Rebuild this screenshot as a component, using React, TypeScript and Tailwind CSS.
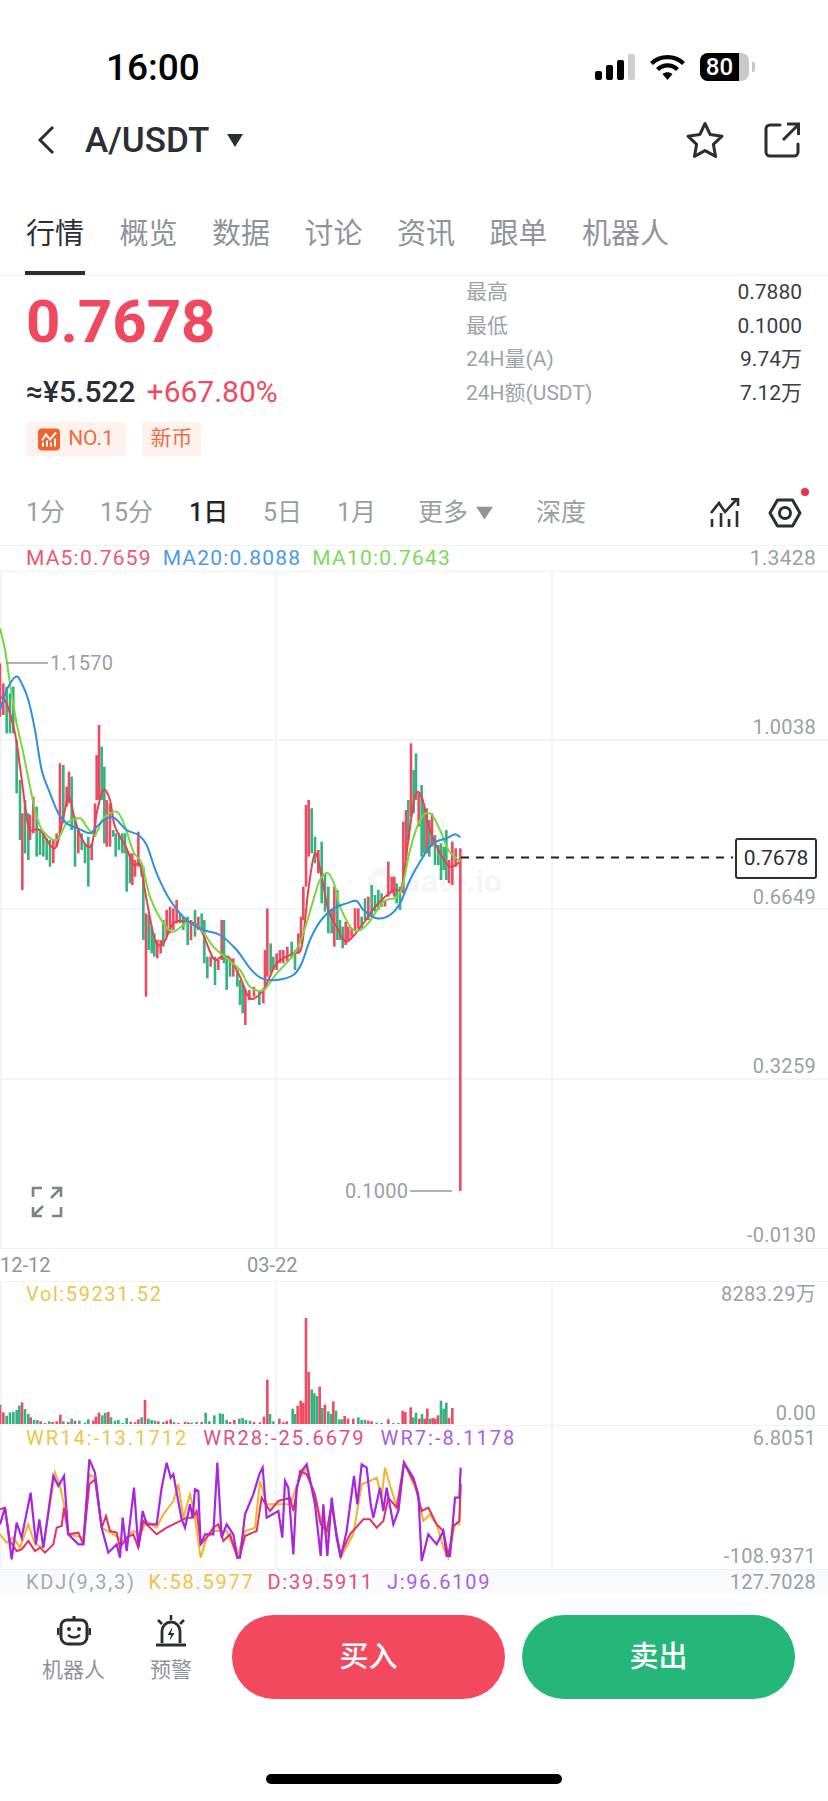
import React from "react";

type P = [number, number];
const RAW = "0,190,350,R 10,250,345,R 20,260,400,G 30,280,400,G 40,260,400,G 50,420,580,G 60,540,720,G 67,640,870,R 75,600,760,G 85,640,780,G 90,645,720,R 100,590,700,R 110,620,770,G 120,690,765,G 130,700,770,G 140,715,780,G 150,720,800,G 160,720,790,R 170,700,740,R 180,490,700,R 190,495,670,G 200,560,620,R 207,515,610,R 215,530,690,G 225,650,800,G 235,690,760,R 245,700,750,G 255,730,790,G 265,710,860,G 275,730,780,R 285,610,710,R 290,465,600,R 297,375,600,R 305,440,600,G 313,500,730,G 320,600,740,R 330,610,740,R 340,690,710,G 347,700,770,G 357,700,750,G 367,700,760,G 375,700,760,G 380,750,875,G 390,760,850,G 397,760,855,R 405,780,830,R 415,695,800,R 425,790,830,G 430,800,1020,G 438,940,1190,R 446,945,1050,G 455,980,1060,G 463,1000,1070,G 472,1020,1075,R 482,1020,1060,R 490,960,1040,G 500,930,1010,R 510,920,1000,R 520,925,990,R 530,900,970,R 540,940,970,G 550,950,990,G 563,950,1035,G 573,960,1020,R 585,930,1010,G 595,950,990,R 605,940,990,G 613,960,1090,G 622,1070,1135,G 632,1070,1100,R 645,1070,1155,G 655,1080,1110,R 665,960,1080,R 672,960,1090,G 680,1070,1170,G 690,1080,1130,G 700,1075,1130,R 712,1110,1160,G 720,1140,1215,G 728,1150,1240,G 736,1170,1275,R 748,1170,1200,R 762,1160,1190,R 778,1170,1215,G 790,1165,1210,R 795,1050,1170,R 802,925,1130,R 812,1030,1120,G 820,1070,1110,G 830,1060,1110,R 840,1050,1090,R 850,1050,1090,R 862,1040,1085,R 875,1025,1075,G 885,1050,1110,G 895,1000,1060,R 903,950,1030,R 910,860,960,R 918,615,860,R 926,600,770,R 935,625,760,G 945,710,790,G 955,750,820,R 965,725,910,G 975,820,935,G 985,860,1000,G 995,930,1000,G 1003,860,1040,R 1012,870,1020,G 1020,960,1020,G 1028,980,1045,G 1037,965,1035,R 1045,980,1020,R 1055,985,1010,R 1065,925,990,R 1075,925,985,R 1085,950,985,G 1095,895,960,G 1105,890,960,R 1115,855,950,G 1125,885,935,G 1135,870,930,G 1145,880,920,G 1155,900,920,R 1165,785,890,R 1175,830,880,R 1183,830,890,R 1190,850,910,G 1200,860,930,G 1210,665,880,R 1218,630,770,R 1225,600,720,G 1233,430,650,R 1241,510,640,G 1248,460,600,G 1256,580,680,R 1265,555,770,G 1273,620,760,G 1280,625,760,R 1288,660,770,G 1296,640,740,R 1305,705,795,G 1315,735,795,G 1323,730,840,G 1331,740,810,G 1339,690,840,G 1347,780,850,R 1357,725,855,R 1367,745,800,R 1381,745,1773,R";

const BLUE: P[] = [[0,330],[20,270],[48,230],[65,250],[85,300],[105,390],[125,510],[150,580],[175,640],[200,670],[240,688],[270,700],[290,680],[320,655],[345,655],[380,690],[415,705],[440,735],[470,820],[510,900],[560,960],[610,990],[660,1005],[710,1050],[750,1105],[785,1135],[830,1140],[880,1125],[905,1090],[930,1020],[960,965],[1000,925],[1040,910],[1070,903],[1090,930],[1130,955],[1170,945],[1200,910],[1230,840],[1260,785],[1300,730],[1340,715],[1365,703],[1381,712]];
const GREEN: P[] = [[0,85],[15,150],[30,250],[50,370],[70,460],[90,560],[110,650],[130,695],[170,720],[200,670],[240,655],[260,680],[285,705],[310,655],[350,635],[375,680],[400,755],[425,790],[450,890],[490,970],[520,995],[560,970],[600,985],[640,1040],[680,1075],[720,1110],[750,1160],[790,1170],[830,1120],[880,1065],[910,1000],[940,900],[960,840],[985,820],[1005,860],[1020,920],[1060,990],[1100,975],[1150,905],[1200,880],[1230,750],[1260,660],[1290,640],[1320,690],[1345,750],[1381,785]];
const RED: P[] = [[0,290],[20,310],[45,400],[60,500],[80,650],[90,690],[120,690],[165,745],[190,650],[207,590],[225,660],[250,725],[275,735],[290,640],[310,570],[330,600],[345,680],[380,745],[400,795],[420,795],[440,900],[465,1020],[490,1030],[520,970],[560,965],[600,985],[640,1075],[665,1070],[690,1075],[720,1130],[750,1195],[790,1170],[830,1090],[880,1060],[905,1040],[925,870],[945,760],[965,830],[985,930],[1010,980],[1040,1025],[1090,970],[1130,915],[1180,870],[1205,860],[1225,720],[1245,590],[1265,590],[1290,690],[1320,760],[1350,800],[1381,785]];

const VOL = "0,58,R 10,35,R 20,25,G 30,35,G 40,36,G 50,42,G 58,55,G 66,65,R 75,45,G 85,30,G 92,20,R 102,12,G 112,12,G 122,8,R 135,3,G 148,8,G 158,6,R 170,8,R 181,28,R 190,8,G 205,6,R 215,16,G 225,10,R 238,10,G 255,4,G 265,14,G 280,10,R 288,22,R 297,34,R 307,26,G 316,34,G 325,36,R 333,20,G 345,10,G 355,12,G 368,3,G 380,18,G 392,6,R 405,5,R 415,14,R 425,20,G 435,72,R 445,16,G 455,12,G 465,10,G 475,8,R 490,6,G 500,10,R 512,14,R 522,6,G 535,3,R 555,6,R 565,5,R 575,4,G 590,6,G 605,6,R 617,34,G 628,8,G 643,26,G 660,32,G 668,30,G 680,12,G 690,6,R 703,12,R 718,16,G 728,18,G 738,12,G 750,10,G 762,6,R 780,5,R 792,22,R 802,133,R 810,30,G 820,8,G 838,16,R 850,5,R 860,8,R 878,46,G 885,30,G 893,54,R 902,70,R 910,64,R 918,318,R 926,156,R 935,104,G 943,92,G 951,84,G 959,112,R 967,48,G 975,58,R 985,38,G 993,30,G 1000,68,R 1008,40,G 1018,14,G 1026,14,G 1034,24,R 1044,16,R 1060,16,R 1075,20,G 1085,12,G 1095,12,G 1105,10,R 1115,8,R 1130,4,G 1145,3,G 1165,14,R 1180,3,G 1195,3,G 1208,40,R 1216,36,R 1232,50,R 1240,20,G 1248,34,G 1258,16,R 1266,30,G 1274,16,R 1282,46,R 1290,16,G 1298,18,R 1306,16,R 1314,26,R 1323,70,G 1331,46,G 1339,64,G 1347,18,R 1357,48,R";

const W7: P[] = [[0,760],[15,710],[35,865],[50,755],[65,800],[92,665],[108,820],[118,745],[130,830],[160,615],[175,645],[192,615],[205,790],[235,820],[250,820],[268,565],[285,605],[305,770],[325,845],[350,820],[360,860],[368,740],[380,840],[402,650],[415,830],[428,720],[440,760],[470,760],[485,650],[500,575],[512,620],[520,610],[545,745],[555,770],[570,700],[578,740],[585,655],[595,660],[602,820],[615,790],[640,790],[652,575],[665,800],[680,760],[700,790],[712,860],[720,860],[735,730],[760,670],[778,610],[788,590],[800,740],[835,720],[847,800],[855,630],[865,650],[880,850],[890,650],[905,600],[920,580],[945,700],[962,855],[970,700],[982,855],[995,680],[1010,800],[1022,860],[1040,780],[1062,615],[1072,700],[1085,580],[1100,590],[1112,700],[1120,740],[1140,650],[1150,720],[1160,650],[1180,760],[1195,720],[1212,575],[1240,620],[1255,670],[1265,870],[1285,790],[1310,820],[1330,780],[1340,855],[1350,855],[1365,680],[1378,680],[1382,590]];
const W28: P[] = [[0,715],[15,710],[30,810],[50,840],[65,835],[85,810],[105,840],[120,830],[135,845],[160,820],[170,770],[185,765],[192,710],[205,790],[235,785],[250,820],[268,640],[285,625],[305,770],[318,735],[330,780],[350,785],[360,830],[380,800],[400,790],[415,830],[430,750],[470,790],[500,770],[520,760],[560,740],[578,740],[590,720],[602,820],[620,800],[640,770],[655,760],[670,810],[690,790],[712,860],[720,855],[735,795],[770,780],[785,680],[810,720],[835,690],[870,680],[880,720],[900,600],[920,610],[945,670],[962,760],[980,780],[995,700],[1010,790],[1022,850],[1050,790],[1090,745],[1110,745],[1130,770],[1150,750],[1165,680],[1190,710],[1212,575],[1245,640],[1265,720],[1285,710],[1310,760],[1330,780],[1345,855],[1360,765],[1378,750],[1382,640]];
const W14: P[] = [[0,790],[20,815],[40,800],[60,830],[85,760],[105,820],[130,830],[150,700],[165,605],[180,645],[192,700],[205,790],[250,800],[268,610],[285,620],[305,770],[340,790],[370,810],[400,780],[420,790],[440,750],[470,770],[490,730],[520,690],[535,640],[550,740],[570,670],[580,710],[602,860],[620,800],[640,780],[680,780],[712,855],[735,780],[765,770],[780,630],[800,700],[835,700],[870,700],[900,620],[920,590],[945,680],[962,740],[980,800],[995,700],[1010,800],[1022,860],[1060,790],[1085,640],[1110,630],[1130,620],[1145,680],[1155,590],[1175,660],[1195,720],[1212,575],[1250,660],[1270,750],[1290,730],[1310,760],[1330,830],[1345,860],[1365,760],[1378,760],[1382,640]];

const CR = "#ee4b63";
const CG = "#35b27f";

function smooth(pts: P[], mx: (x: number) => number, my: (y: number) => number) {
  const q = pts.map(([x, y]) => [mx(x), my(y)]);
  let d = `M${q[0][0]} ${q[0][1]}`;
  for (let i = 0; i < q.length - 1; i++) {
    const a = q[Math.max(i - 1, 0)], b = q[i], c = q[i + 1], e = q[Math.min(i + 2, q.length - 1)];
    d += `C${b[0] + (c[0] - a[0]) / 6} ${b[1] + (c[1] - a[1]) / 6} ${c[0] - (e[0] - b[0]) / 6} ${c[1] - (e[1] - b[1]) / 6} ${c[0]} ${c[1]}`;
  }
  return d;
}

const Grid = ({ h, lines = [] }: { h: number; lines?: number[] }) => (
  <>
    {[1, 276, 552].map((x) => (
      <line key={x} x1={x} x2={x} y1={0} y2={h} stroke="#f1f2f6" strokeWidth="1.5" />
    ))}
    {lines.map((y) => (
      <line key={y} x1={0} x2={828} y1={y} y2={y} stroke="#f1f2f6" strokeWidth="1.5" />
    ))}
  </>
);

function MainChart() {
  const mx = (x: number) => x / 3;
  const my = (y: number) => 28 + y / 3;
  return (
    <svg className="absolute inset-0" width="828" height="676" viewBox="0 0 828 676">
      <Grid h={676} lines={[168, 337, 507]} />
      {RAW.split(" ").map((s, i) => {
        const [x, t, b, c] = s.split(",");
        return (
          <rect
            key={i}
            x={mx(+x) - 1.3}
            y={my(+t)}
            width={2.6}
            height={(+b - +t) / 3}
            fill={c === "R" ? CR : CG}
          />
        );
      })}
      <path d={smooth(RED, mx, my)} fill="none" stroke="#ee3f4f" strokeWidth="2" />
      <path d={smooth(GREEN, mx, my)} fill="none" stroke="#74d93a" strokeWidth="2" />
      <path d={smooth(BLUE, mx, my)} fill="none" stroke="#2f8fe0" strokeWidth="2" />
      <line x1="6" x2="48" y1="91" y2="91" stroke="#9a9a9a" strokeWidth="1.4" />
      <line x1="410" x2="452" y1="619" y2="619" stroke="#9a9a9a" strokeWidth="1.4" />
      <line x1="461" x2="733" y1="285.5" y2="285.5" stroke="#222" strokeWidth="1.8" strokeDasharray="8 7" />
    </svg>
  );
}

function VolChart() {
  return (
    <svg className="absolute inset-0" width="828" height="143" viewBox="0 0 828 143">
      <Grid h={143} />
      {VOL.split(" ").map((s, i) => {
        const [x, h, c] = s.split(",");
        return (
          <rect key={i} x={+x / 3 - 1.3} y={142 - +h / 3} width={2.6} height={+h / 3} fill={c === "R" ? CR : CG} />
        );
      })}
    </svg>
  );
}

function WrChart() {
  const pts = (p: P[]) => p.map(([x, y]) => `${x / 3},${y / 3 - 155}`).join(" ");
  return (
    <svg className="absolute inset-0" width="828" height="144" viewBox="0 0 828 144">
      <Grid h={144} />
      <polyline points={pts(W14)} fill="none" stroke="#f3b32b" strokeWidth="2" />
      <polyline points={pts(W28)} fill="none" stroke="#e72f63" strokeWidth="2" />
      <polyline points={pts(W7)} fill="none" stroke="#a626e2" strokeWidth="2.2" />
    </svg>
  );
}

const Tab = ({ t, active }: { t: string; active?: boolean }) => (
  <div
    className={`flex h-full flex-col items-center ${active ? "text-[#2b2e35]" : "text-[#8f949c]"} text-[29px] leading-[40px] pt-[34px]`}
  >
    <span>{t}</span>
    {active && <span className="mt-auto h-[4px] w-[60px] bg-[#2b2e35]" />}
  </div>
);

const Stat = ({ l, v }: { l: string; v: string }) => (
  <div className="flex h-[33.5px] items-center justify-between text-[21px]">
    <span className="text-[#9ea3aa]">{l}</span>
    <span className="text-[#3a3d44]">{v}</span>
  </div>
);

const Period = ({ t, w, active }: { t: string; w: string; active?: boolean }) => (
  <span className={`${w} ${active ? "font-medium text-[#1f2228]" : "text-[#9a9fa7]"}`}>{t}</span>
);

export default function App() {
  return (
    <div className="relative flex h-[1801px] w-[828px] flex-col overflow-hidden bg-white font-[Roboto,'Noto_Sans_CJK_SC',sans-serif] text-[#2b2e35]">
      {/* status bar */}
      <div className="flex h-[100px] shrink-0 items-center justify-between pl-[106px] pr-[73px] pt-[34px]">
        <span className="text-[37px] font-medium leading-none text-black">16:00</span>
        <div className="flex items-center gap-[15px]">
          <svg width="40" height="26" viewBox="0 0 40 26">
            <rect x="0" y="17" width="7" height="9" rx="2" fill="#000" />
            <rect x="11" y="11" width="7" height="15" rx="2" fill="#000" />
            <rect x="22" y="6" width="7" height="20" rx="2" fill="#000" />
            <rect x="33" y="0" width="7" height="26" rx="2" fill="#cfcfcf" />
          </svg>
          <svg width="35" height="26" viewBox="0 0 35 26">
            <path d="M1.5 9.5C10 1 25 1 33.5 9.5" fill="none" stroke="#000" strokeWidth="4.2" />
            <path d="M7.5 15.5C13 10 22 10 27.5 15.5" fill="none" stroke="#000" strokeWidth="4.2" />
            <path d="M12.5 20L17.5 26L22.5 20C19.5 17.5 15.5 17.5 12.5 20Z" fill="#000" />
          </svg>
          <div className="flex items-center gap-[3px]">
            <div className="h-[28px] w-[49px] overflow-hidden rounded-[8px] bg-[#c8c8c8]">
              <div className="flex h-full w-[39px] items-center justify-center bg-black text-[24px] font-medium leading-none text-white">
                80
              </div>
            </div>
            <div className="h-[10px] w-[3px] rounded-r-[2px] bg-[#c8c8c8]" />
          </div>
        </div>
      </div>

      {/* nav */}
      <div className="flex h-[80px] shrink-0 items-center pl-[36px] pr-[28px]">
        <svg width="20" height="30" viewBox="0 0 20 30">
          <path d="M17 2L4 15L17 28" fill="none" stroke="#2b2e35" strokeWidth="3" />
        </svg>
        <span className="ml-[29px] text-[35px] font-medium leading-none">A/USDT</span>
        <svg className="ml-[17px]" width="18" height="13" viewBox="0 0 18 13">
          <path d="M1 0H17L9 13Z" fill="#2b2e35" />
        </svg>
        <svg className="ml-auto" width="40" height="38" viewBox="0 0 40 38">
          <path
            d="M20 2.5L25.2 13.6L37 15.2L28.4 23.4L30.6 35.4L20 29.6L9.4 35.4L11.6 23.4L3 15.2L14.8 13.6Z"
            fill="none"
            stroke="#2b2e35"
            strokeWidth="3"
            strokeLinejoin="round"
          />
        </svg>
        <svg className="ml-[39px]" width="36" height="36" viewBox="0 0 36 36">
          <path
            d="M16 3H6A4 4 0 0 0 2 7V30A4 4 0 0 0 6 34H30A4 4 0 0 0 34 30V22"
            fill="none"
            stroke="#2b2e35"
            strokeWidth="3"
            strokeLinecap="round"
          />
          <path d="M19 18L34 3M23 2H34.5V13" fill="none" stroke="#2b2e35" strokeWidth="3" />
        </svg>
      </div>

      {/* tabs */}
      <div className="flex h-[96px] shrink-0 gap-[34.5px] border-b border-[#eeeff2] pl-[25px]">
        <Tab t="行情" active />
        <Tab t="概览" />
        <Tab t="数据" />
        <Tab t="讨论" />
        <Tab t="资讯" />
        <Tab t="跟单" />
        <Tab t="机器人" />
      </div>

      {/* summary */}
      <div className="flex h-[204px] shrink-0 justify-between pl-[26px] pr-[26px]">
        <div className="flex flex-col">
          <span className="mt-[10px] text-[60px] font-bold leading-[72px] text-[#f0495f]">0.7678</span>
          <div className="mt-[15px] flex gap-[11px] text-[30px] leading-[38px]">
            <span className="font-medium text-[#2b2e35]">≈¥5.522</span>
            <span className="text-[#ee4b63]">+667.80%</span>
          </div>
          <div className="mt-[11px] flex gap-[16px] text-[21px] text-[#ee6d42]">
            <div className="flex h-[34px] w-[100px] items-center justify-center gap-[8px] rounded-[3px] bg-[#fdf2ed]">
              <svg width="22" height="23" viewBox="0 0 22 22">
                <rect width="22" height="22" rx="4" fill="#f0622f" />
                <path d="M4 12L8 6L12 11L18 4" fill="none" stroke="#fff" strokeWidth="2" />
                <path d="M5 18V14M9 18V12M13 18V14M17 18V10" stroke="#fff" strokeWidth="2" />
              </svg>
              <span>NO.1</span>
            </div>
            <div className="flex h-[34px] w-[59px] items-center justify-center rounded-[3px] bg-[#fdf2ed]">新币</div>
          </div>
        </div>
        <div className="w-[336px]">
          <Stat l="最高" v="0.7880" />
          <Stat l="最低" v="0.1000" />
          <Stat l="24H量(A)" v="9.74万" />
          <Stat l="24H额(USDT)" v="7.12万" />
        </div>
      </div>

      {/* periods */}
      <div className="flex h-[65px] shrink-0 items-center pl-[26px] pr-[26px] text-[25px]">
        <Period t="1分" w="w-[74px]" />
        <Period t="15分" w="w-[89px]" />
        <Period t="1日" w="w-[74px]" active />
        <Period t="5日" w="w-[74px]" />
        <Period t="1月" w="w-[81px]" />
        <span className="text-[#9a9fa7]">更多</span>
        <svg className="ml-[8px]" width="17" height="14" viewBox="0 0 16 12">
          <path d="M0 0H16L8 12Z" fill="#8f949c" />
        </svg>
        <span className="ml-[43px] text-[#9a9fa7]">深度</span>
        <svg className="ml-auto" width="30" height="30" viewBox="0 0 30 30">
          <path d="M1 15L9 5L15 14L27 1M21 1H28V8" fill="none" stroke="#2b2e35" strokeWidth="2.6" />
          <path d="M2 29V21M11 29V15M19 29V21M27 29V13" stroke="#2b2e35" strokeWidth="2.6" />
        </svg>
        <div className="relative ml-[28px]">
          <svg width="34" height="32" viewBox="0 0 34 32">
            <path d="M9.5 3H24.5L32 16L24.5 29H9.5L2 16Z" fill="none" stroke="#2b2e35" strokeWidth="3" strokeLinejoin="round" />
            <circle cx="17" cy="16" r="5.5" fill="none" stroke="#2b2e35" strokeWidth="3" />
          </svg>
          <span className="absolute right-[-7px] top-[-9px] h-[8px] w-[8px] rounded-full bg-[#ee3344]" />
        </div>
      </div>

      {/* MA row */}
      <div className="flex h-[27px] shrink-0 items-center justify-between border-y border-[#f1f2f5] pl-[26px] pr-[12px] text-[21px] leading-none">
        <div className="flex gap-[11px] tracking-[1.2px]">
          <span className="text-[#ea5a6e]">MA5:0.7659</span>
          <span className="text-[#4a9be6]">MA20:0.8088</span>
          <span className="text-[#7ed957]">MA10:0.7643</span>
        </div>
        <span className="tracking-[0.3px] text-[#9a9fa7]">1.3428</span>
      </div>

      {/* main chart */}
      <div className="relative h-[676px] shrink-0 text-[20px] leading-none tracking-[0.3px] text-[#9a9fa7]">
        <div className="absolute left-[368px] top-[293px] flex items-center gap-[5px] text-[32px] font-bold tracking-normal text-[#f5f6f8]">
          <span className="h-[26px] w-[26px] rounded-full border-[7px] border-[#f5f6f8]" />
          <span>Gate.io</span>
        </div>
        <MainChart />
        <span className="absolute left-[50px] top-[81px]">1.1570</span>
        <span className="absolute left-[345px] top-[609px]">0.1000</span>
        <span className="absolute right-[12px] top-[145px]">1.0038</span>
        <span className="absolute right-[12px] top-[315px]">0.6649</span>
        <span className="absolute right-[12px] top-[484px]">0.3259</span>
        <span className="absolute right-[12px] top-[653px]">-0.0130</span>
        <div className="absolute left-[735px] top-[266px] flex h-[41px] w-[82px] items-center justify-center rounded-[3px] border-2 border-[#2b2e35] bg-white text-[21px] tracking-normal text-[#2b2e35]">
          0.7678
        </div>
        <svg className="absolute left-[31px] top-[614px]" width="32" height="32" viewBox="0 0 32 32">
          <path
            d="M2 11V2H11M21 2H30V11M2 21V30H11M30 21V30H21M3 29L12 20M29 3L20 12"
            fill="none"
            stroke="#7d828b"
            strokeWidth="2.6"
          />
        </svg>
      </div>

      {/* date row */}
      <div className="relative h-[34px] shrink-0 border-y border-[#f1f2f5] text-[20px] leading-[32px] text-[#8f949c]">
        <span className="absolute left-0 top-0">12-12</span>
        <span className="absolute left-[247px] top-0">03-22</span>
      </div>

      {/* volume */}
      <div className="relative h-[143px] shrink-0 text-[20px] leading-none">
        <VolChart />
        <span className="absolute left-[26px] top-[2px] tracking-[1.6px] text-[#eec44a]">Vol:59231.52</span>
        <span className="absolute right-[12px] top-[2px] tracking-[0.3px] text-[#9a9fa7]">8283.29万</span>
        <span className="absolute right-[12px] top-[121px] tracking-[0.3px] text-[#9a9fa7]">0.00</span>
      </div>

      {/* WR */}
      <div className="relative h-[144px] shrink-0 border-t border-[#f1f2f5] text-[20px] leading-none">
        <WrChart />
        <div className="absolute left-[26px] top-[2px] flex gap-[15px] tracking-[2.05px]">
          <span className="text-[#eec44a]">WR14:-13.1712</span>
          <span className="text-[#e2507e]">WR28:-25.6679</span>
          <span className="text-[#a860e0]">WR7:-8.1178</span>
        </div>
        <span className="absolute right-[12px] top-[2px] tracking-[0.3px] text-[#9a9fa7]">6.8051</span>
        <span className="absolute right-[12px] top-[120px] tracking-[0.3px] text-[#9a9fa7]">-108.9371</span>
      </div>

      {/* KDJ */}
      <div className="flex h-[24px] shrink-0 items-center justify-between border-t border-[#eceef2] bg-[#f9fafc] pl-[26px] pr-[12px] text-[20px] leading-none">
        <div className="flex gap-[13px] tracking-[1.75px]">
          <span className="text-[#a6aab1]">KDJ(9,3,3)</span>
          <span className="text-[#eec44a]">K:58.5977</span>
          <span className="text-[#e2507e]">D:39.5911</span>
          <span className="text-[#a860e0]">J:96.6109</span>
        </div>
        <span className="tracking-[0.3px] text-[#9a9fa7]">127.7028</span>
      </div>

      {/* footer */}
      <div className="flex items-start pl-[42px] pt-[22px]">
        <div className="flex w-[63px] flex-col items-center">
          <svg width="34" height="32" viewBox="0 0 34 32">
            <path d="M17 1V5" stroke="#2b2e35" strokeWidth="3" />
            <path d="M10 5H24A6 6 0 0 1 30 11V22A7 7 0 0 1 23 29H11A7 7 0 0 1 4 22V11A6 6 0 0 1 10 5Z" fill="none" stroke="#2b2e35" strokeWidth="3" />
            <path d="M1 13V20M33 13V20" stroke="#2b2e35" strokeWidth="3" />
            <circle cx="12" cy="14" r="2" fill="#2b2e35" />
            <circle cx="22" cy="14" r="2" fill="#2b2e35" />
            <path d="M11 20Q17 25 23 20" fill="none" stroke="#2b2e35" strokeWidth="2.4" />
          </svg>
          <span className="mt-[9px] text-[21px] leading-[28px] text-[#8f949c]">机器人</span>
        </div>
        <div className="ml-[45px] flex w-[42px] flex-col items-center">
          <svg width="32" height="32" viewBox="0 0 32 32">
            <path d="M16 0V5M3 5L7 9M29 5L25 9" stroke="#2b2e35" strokeWidth="2.6" />
            <path d="M7 28V16A9 9 0 0 1 25 16V28" fill="none" stroke="#2b2e35" strokeWidth="2.8" />
            <path d="M1 30H31" stroke="#2b2e35" strokeWidth="3" />
            <path d="M17.5 12L12.5 20H16L14.5 26L19.5 18H16Z" fill="#2b2e35" />
          </svg>
          <span className="mt-[9px] text-[21px] leading-[28px] text-[#8f949c]">预警</span>
        </div>
        <button className="ml-[40px] h-[84px] w-[273px] rounded-full bg-[#f2495f] pt-[2px] text-[29px] font-medium text-white">
          买入
        </button>
        <button className="ml-[17px] h-[84px] w-[273px] rounded-full bg-[#25b77a] pt-[2px] text-[29px] font-medium text-white">
          卖出
        </button>
      </div>

      <div className="absolute left-[266px] top-[1774px] h-[10px] w-[296px] rounded-full bg-black" />
    </div>
  );
}
